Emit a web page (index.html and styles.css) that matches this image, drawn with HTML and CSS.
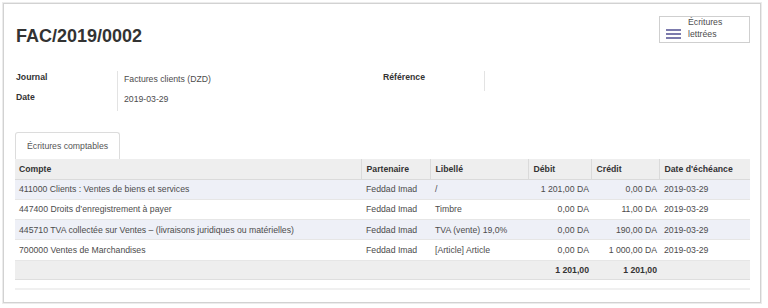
FILE: index.html
```html
<!DOCTYPE html>
<html>
<head>
  <title>FAC/2019/0002</title>
  <meta charset="UTF-8">
  <link rel="stylesheet" href="styles.css">
</head>
<body>
  <div class="sheet">
    <div class="sheet-head">
      <h1 class="title">FAC/2019/0002</h1>
      <button class="stat-button">
        <svg class="stat-icon" width="15" height="11" viewBox="0 0 15 11">
          <rect x="0" y="0" width="15" height="2"/>
          <rect x="0" y="4" width="15" height="2"/>
          <rect x="0" y="8" width="15" height="2"/>
        </svg>
        <span class="stat-text">Écritures<br>lettrées</span>
      </button>
    </div>

    <div class="groups">
      <div class="group">
        <div class="field-label">Journal</div>
        <div class="field-value">Factures clients (DZD)</div>
        <div class="field-label">Date</div>
        <div class="field-value">2019-03-29</div>
      </div>
      <div class="group">
        <div class="field-label">Référence</div>
        <div class="field-value"></div>
      </div>
    </div>

    <div class="tabs">
      <div class="tab active">Écritures comptables</div>
    </div>

    <table class="lines">
      <thead>
        <tr>
          <th class="col-account">Compte</th>
          <th class="col-partner">Partenaire</th>
          <th class="col-label">Libellé</th>
          <th class="col-debit">Débit</th>
          <th class="col-credit">Crédit</th>
          <th class="col-date">Date d'échéance</th>
        </tr>
      </thead>
      <tbody>
        <tr class="odd">
          <td>411000 Clients : Ventes de biens et services</td>
          <td>Feddad Imad</td>
          <td>/</td>
          <td class="num">1&nbsp;201,00 DA</td>
          <td class="num">0,00 DA</td>
          <td>2019-03-29</td>
        </tr>
        <tr>
          <td>447400 Droits d’enregistrement à payer</td>
          <td>Feddad Imad</td>
          <td>Timbre</td>
          <td class="num">0,00 DA</td>
          <td class="num">11,00 DA</td>
          <td>2019-03-29</td>
        </tr>
        <tr class="odd">
          <td>445710 TVA collectée sur Ventes – (livraisons juridiques ou matérielles)</td>
          <td>Feddad Imad</td>
          <td>TVA (vente) 19,0%</td>
          <td class="num">0,00 DA</td>
          <td class="num">190,00 DA</td>
          <td>2019-03-29</td>
        </tr>
        <tr>
          <td>700000 Ventes de Marchandises</td>
          <td>Feddad Imad</td>
          <td>[Article] Article</td>
          <td class="num">0,00 DA</td>
          <td class="num">1&nbsp;000,00 DA</td>
          <td>2019-03-29</td>
        </tr>
      </tbody>
      <tfoot>
        <tr>
          <td></td>
          <td></td>
          <td></td>
          <td class="num">1&nbsp;201,00</td>
          <td class="num">1&nbsp;201,00</td>
          <td></td>
        </tr>
      </tfoot>
    </table>
    <div class="table-end"></div>
  </div>
</body>
</html>
```

FILE: styles.css
```css
body {
  font-family: 'Liberation Sans', Arial, Helvetica, sans-serif;
  font-size: 8.7px;
  color: #4c4c4c;
  margin: 0;
  padding: 3px;
  background: #fff;
}
.sheet {
  width: 735px;
  height: 286px;
  border: 1px solid #d2d2d2;
  box-shadow: 0 0 0 1px #ececec;
  padding: 12px 10px 0 11px;
}
.sheet-head {
  display: flex;
  justify-content: space-between;
  align-items: flex-start;
}
.title {
  margin: 9px 0 0 1px;
  font-size: 18px;
  font-weight: bold;
  color: #333;
  line-height: 22px;
}
.stat-button {
  display: flex;
  align-items: center;
  width: 91px;
  height: 27px;
  padding: 0 0 0 6px;
  background: #fff;
  border: 1px solid #cfcfcf;
  font-family: inherit;
  font-size: 8.7px;
  color: #4c4c4c;
  text-align: left;
  cursor: pointer;
}
.stat-icon {
  fill: #7c7bad;
  margin: 9px 7px 0 0;
  flex: none;
}
.stat-text {
  line-height: 11.5px;
  margin-top: -2px;
}
.groups {
  display: flex;
  margin-top: 24px;
  margin-left: 1px;
}
.group {
  display: grid;
  grid-template-columns: 101px 1fr;
  grid-auto-rows: 20px;
  width: 367px;
}
.field-label {
  font-weight: bold;
  color: #333;
  padding-top: 1px;
}
.field-value {
  border-left: 1px solid #e3e3e3;
  padding: 3px 0 0 6px;
}
.tabs {
  display: flex;
  margin-top: 21px;
}
.tab {
  height: 26px;
  line-height: 26px;
  padding: 0 11px;
  border: 1px solid #dcdcdc;
  border-bottom: none;
  border-radius: 3px 3px 0 0;
  color: #555;
}
.lines {
  width: 735px;
  border-collapse: collapse;
  table-layout: fixed;
}
.lines th,
.lines td {
  box-sizing: border-box;
  height: 20px;
  padding: 0 4px 0 5px;
  white-space: nowrap;
  overflow: hidden;
  text-align: left;
}
.lines th:first-child,
.lines td:first-child {
  padding-left: 4px;
}
.lines th {
  background: #eee;
  color: #333;
  font-weight: bold;
  border-left: 1px solid #dadada;
  border-bottom: 1px solid #dadada;
}
.lines th:first-child {
  border-left: none;
}
.lines td {
  height: 20.3px;
  border-bottom: 1px solid #e6e6e6;
}
.lines tr.odd td {
  background: #eef0f7;
}
.lines .num {
  text-align: right;
  padding-right: 2px;
}
.lines tfoot td {
  background: #eee;
  font-weight: bold;
  color: #333;
  height: 19px;
  border-bottom: 1px solid #dedede;
}
.col-account { width: 346px; }
.col-partner { width: 69px; }
.col-label { width: 98px; }
.col-debit { width: 63px; }
.col-credit { width: 68px; }
.col-date { width: 91px; }
.table-end {
  width: 735px;
  height: 2px;
  margin-top: 8px;
  background: #f0f0f0;
}
```
